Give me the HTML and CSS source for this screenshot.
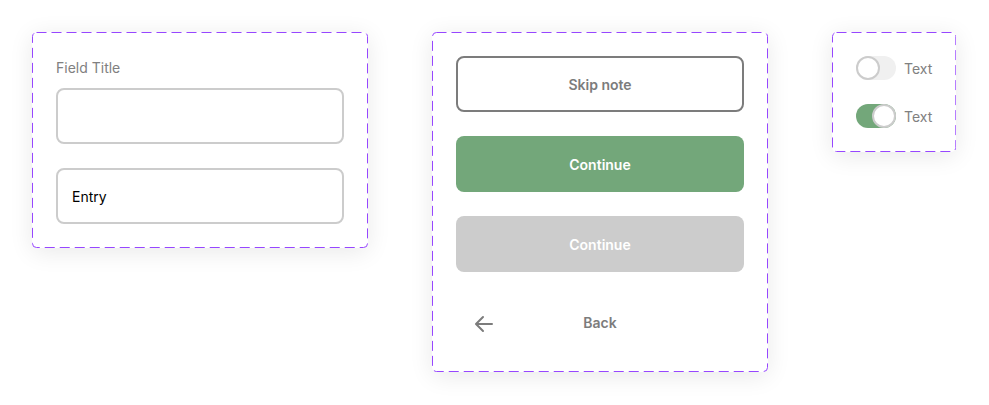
FILE: index.html
```html
<!DOCTYPE html>
<html lang="en">
<head>
    <meta charset="UTF-8">
    <meta name="viewport" content="width=device-width, initial-scale=1.0">
    <title>Form Components</title>
    <link rel="stylesheet" href="styles.css">
</head>
<body>
    <div class="board">
        <!-- text fields -->
        <div class="panel fields">
            <svg class="frame"><rect x="0.5" y="0.5" rx="4" ry="4"></rect></svg>
            <label class="field-title">Field Title</label>
            <div class="field"></div>
            <div class="field entry">Entry</div>
        </div>

        <!-- buttons -->
        <div class="panel buttons">
            <svg class="frame"><rect x="0.5" y="0.5" rx="4" ry="4"></rect></svg>
            <button class="btn btn-outline">Skip note</button>
            <button class="btn btn-primary">Continue</button>
            <button class="btn btn-disabled">Continue</button>
            <div class="back-row">
                <svg class="back-icon" width="24" height="24" viewBox="0 0 24 24" fill="none">
                    <path d="M20 12H5M11 5l-7 7 7 7" stroke="#7c7c7c" stroke-width="2" stroke-linecap="round" stroke-linejoin="round"/>
                </svg>
                <span class="back-label">Back</span>
            </div>
        </div>

        <!-- toggles -->
        <div class="panel toggles">
            <svg class="frame"><rect x="0.5" y="0.5" rx="4" ry="4"></rect></svg>
            <div class="toggle-row">
                <span class="toggle"><span class="knob"></span></span>
                <span class="toggle-text">Text</span>
            </div>
            <div class="toggle-row">
                <span class="toggle on"><span class="knob"></span></span>
                <span class="toggle-text">Text</span>
            </div>
        </div>
    </div>
</body>
</html>
```

FILE: styles.css
```css
body {
    margin: 0;
    background: #FFFFFF;
    font-family: "Inter", "Open Sans", sans-serif;
    color: #000;
}

.board {
    display: flex;
    align-items: flex-start;
    gap: 64px;
    padding: 32px;
}

.panel {
    position: relative;
    background: #FFFFFF;
    border-radius: 5px;
    padding: 24px;
    box-shadow: 0px 4px 24px rgba(0, 0, 0, 0.09);
    display: flex;
    flex-direction: column;
}

/* dashed purple outline drawn over the panel */
.frame {
    position: absolute;
    left: 0;
    top: 0;
    width: 100%;
    height: 100%;
    pointer-events: none;
}

.frame rect {
    width: calc(100% - 1px);
    height: calc(100% - 1px);
    fill: none;
    stroke: #9747FF;
    stroke-width: 1;
    stroke-dasharray: 10 5;
}

/* fields */
.fields {
    width: 288px;
}

.field-title {
    font-size: 14px;
    line-height: 24px;
    color: #808080;
    margin-bottom: 8px;
}

.field {
    height: 56px;
    box-sizing: border-box;
    border: 2px solid #CCCCCC;
    border-radius: 8px;
    display: flex;
    align-items: center;
    padding: 0 14px;
    font-size: 14px;
    color: #000;
}

.field.entry {
    margin-top: 24px;
}

/* buttons */
.buttons {
    width: 288px;
    padding-bottom: 20px;
    gap: 24px;
}

.btn {
    height: 56px;
    box-sizing: border-box;
    border-radius: 8px;
    font-family: inherit;
    font-size: 14px;
    font-weight: 600;
    border: none;
    cursor: pointer;
}

.btn-outline {
    background: #FFFFFF;
    border: 2px solid #7C7C7C;
    color: #7C7C7C;
}

.btn-primary {
    background: #73A77A;
    color: #FFFFFF;
}

.btn-disabled {
    background: #CCCCCC;
    color: #FFFFFF;
}

.back-row {
    position: relative;
    height: 56px;
    display: flex;
    align-items: center;
    justify-content: center;
}

.back-icon {
    position: absolute;
    left: 16px;
    top: 16px;
}

.back-label {
    font-size: 14px;
    font-weight: 600;
    color: #7C7C7C;
    margin-top: -4px;
}

/* toggles */
.toggles {
    gap: 24px;
}

.toggle-row {
    display: flex;
    align-items: center;
    gap: 8px;
    height: 24px;
}

.toggle {
    width: 40px;
    height: 24px;
    border-radius: 12px;
    background: #F0F0F0;
    display: flex;
    justify-content: flex-start;
}

.toggle.on {
    background: #73A77A;
    justify-content: flex-end;
}

.knob {
    width: 24px;
    height: 24px;
    box-sizing: border-box;
    border-radius: 50%;
    background: #FFFFFF;
    border: 2px solid #CCCCCC;
}

.toggle-text {
    font-size: 14px;
    color: #808080;
}
```
